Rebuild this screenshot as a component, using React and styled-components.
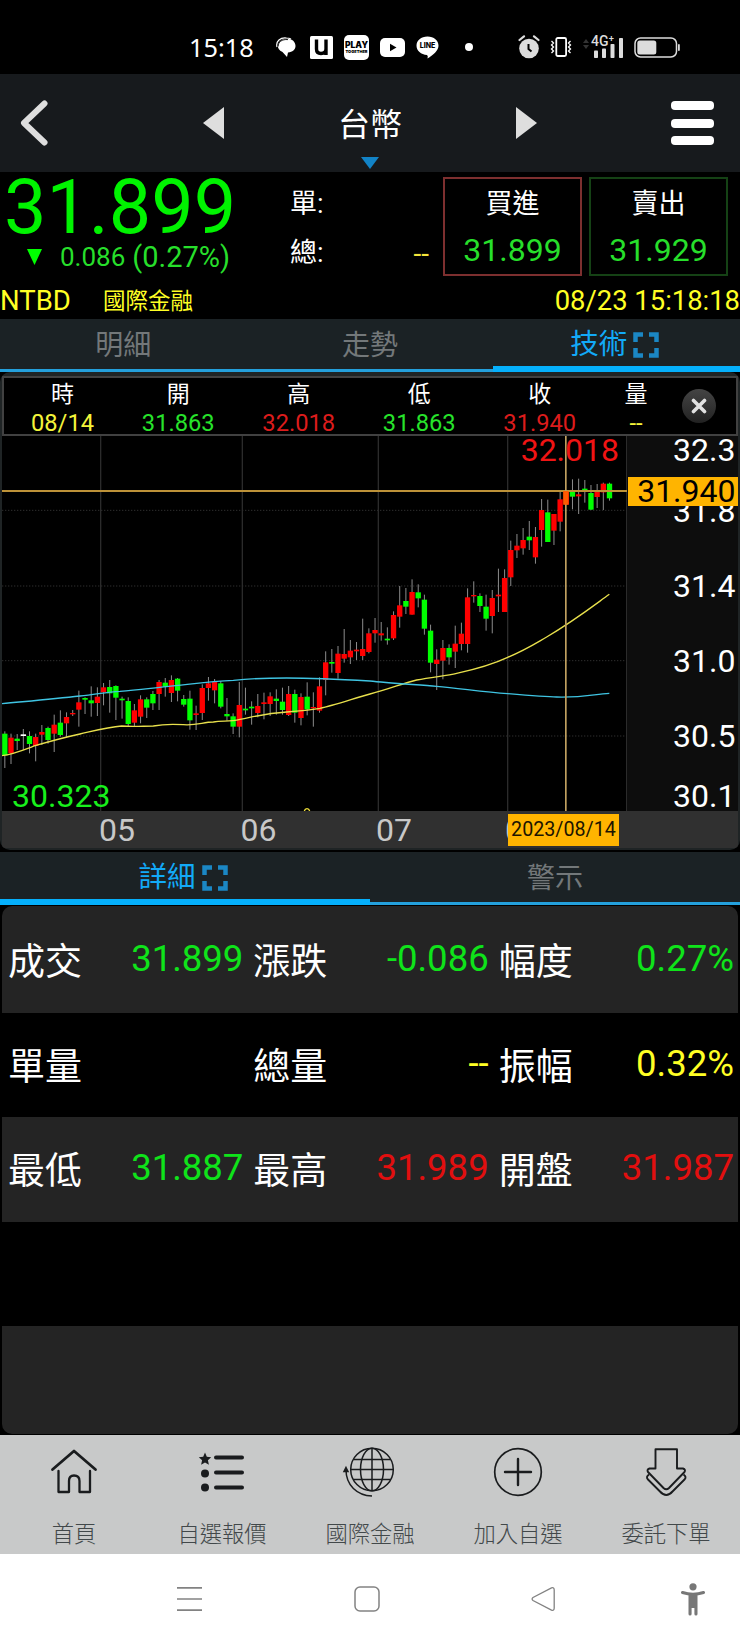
import React from 'react';
import styled, { createGlobalStyle } from 'styled-components';

// [color, body top, body bottom, wick top, wick bottom], 3 units per pixel
const candles = [
  ['g', 431, 496, 424, 534], ['r', 443, 490, 431, 522], ['g', 446, 453, 432, 480], ['w', 433, 438, 417, 480],
  ['g', 438, 462, 424, 490], ['r', 441, 468, 431, 514], ['r', 426, 434, 405, 465], ['g', 414, 450, 410, 461],
  ['r', 404, 431, 374, 486], ['g', 398, 435, 361, 440], ['r', 381, 400, 367, 442], ['r', 369, 373, 360, 378],
  ['r', 337, 359, 302, 410], ['g', 324, 329, 322, 372], ['g', 331, 340, 289, 380], ['r', 320, 339, 292, 378],
  ['r', 292, 307, 279, 346], ['g', 291, 310, 270, 368], ['g', 288, 323, 286, 390], ['g', 326, 331, 320, 386],
  ['g', 333, 402, 322, 408], ['r', 361, 398, 342, 410], ['r', 328, 380, 316, 400], ['g', 328, 353, 322, 384],
  ['g', 312, 340, 303, 360], ['r', 276, 312, 270, 360], ['g', 278, 290, 264, 320], ['r', 270, 309, 256, 336],
  ['g', 266, 302, 264, 334], ['g', 327, 344, 315, 350], ['g', 326, 391, 302, 419], ['r', 370, 375, 347, 420],
  ['r', 294, 369, 283, 390], ['r', 280, 294, 261, 332], ['r', 276, 301, 267, 340], ['g', 280, 350, 273, 355],
  ['g', 372, 379, 324, 392], ['g', 379, 410, 370, 432], ['r', 345, 410, 276, 442], ['g', 356, 361, 293, 374],
  ['g', 350, 355, 334, 404], ['r', 348, 369, 312, 382], ['r', 337, 342, 308, 388], ['r', 319, 342, 307, 378],
  ['g', 326, 333, 298, 374], ['g', 335, 360, 293, 374], ['r', 312, 375, 288, 378], ['g', 312, 368, 299, 398],
  ['r', 321, 384, 310, 406], ['g', 320, 358, 277, 376], ['r', 351, 355, 307, 410], ['r', 289, 362, 262, 368],
  ['r', 217, 270, 184, 316], ['g', 216, 221, 177, 248], ['r', 191, 249, 168, 266], ['r', 192, 206, 117, 218],
  ['r', 182, 202, 150, 222], ['r', 179, 184, 156, 210], ['r', 177, 198, 86, 210], ['r', 130, 186, 115, 190],
  ['r', 120, 130, 84, 158], ['r', 130, 136, 96, 152], ['g', 146, 151, 112, 164], ['r', 75, 145, 64, 150],
  ['r', 46, 80, -12, 113], ['g', 33, 50, -6, 72], ['r', 6, 74, -32, 74], ['g', 7, 25, -17, 52],
  ['g', 29, 116, 14, 134], ['g', 122, 218, 104, 247], ['r', 209, 222, 178, 300], ['r', 174, 212, 150, 268],
  ['g', 174, 202, 163, 224], ['r', 161, 185, 107, 234], ['r', 131, 162, 98, 181], ['r', 22, 162, -5, 188],
  ['r', 15, 19, -26, 38], ['g', 18, 48, 10, 66], ['g', 50, 86, 14, 122], ['r', 24, 78, 0, 130],
  ['r', 14, 19, -64, 66], ['r', -36, 66, -62, 66], ['r', -120, -38, -148, -12], ['r', -133, -119, -168, -96],
  ['r', -150, -125, -186, -106], ['g', -160, -149, -207, -120], ['r', -159, -98, -189, -79], ['r', -240, -180, -273, -130],
  ['g', -233, -144, -271, -144], ['r', -228, -178, -228, -135], ['r', -272, -205, -294, -176], ['r', -297, -256, -300, -256],
  ['g', -297, -280, -332, -242], ['r', -287, -281, -334, -228], ['g', -304, -298, -330, -262], ['g', -291, -241, -315, -240],
  ['r', -298, -279, -318, -246], ['r', -319, -293, -322, -240], ['g', -319, -275, -322, -268],
];

const candleColor = { g: '#00ff00', r: '#ff0000', w: '#ffffff' };

const yellowLine =
  'M6 497 C35 494 70 480 105 467 C150 454 190 443 240 432 C280 423 325 411 365 408 C400 411 430 408 460 408 C490 402 520 402 550 404 C590 407 610 396 640 396 C670 392 690 395 720 388 C780 376 800 370 860 366 C900 363 930 360 960 355 C1000 347 1060 326 1110 312 C1170 297 1210 279 1250 270 C1300 260 1340 258 1370 250 C1420 239 1470 227 1523 202 C1580 178 1610 158 1640 141 C1720 94 1770 55 1828 13';
const cyanLine =
  'M6 341 C90 333 160 327 240 318 C290 313 320 306 360 304 C410 300 450 295 500 290 C570 283 630 274 700 271 C760 265 820 264 860 264 C950 264 1040 269 1110 273 C1160 279 1250 284 1310 289 C1380 295 1450 306 1523 311 C1580 316 1640 321 1670 321 C1750 323 1780 313 1828 310';

const ohlc = [
  { label: '時', value: '08/14', color: '#f4f43a' },
  { label: '開', value: '31.863', color: '#27e32b' },
  { label: '高', value: '32.018', color: '#dc1c1c' },
  { label: '低', value: '31.863', color: '#27e32b' },
  { label: '收', value: '31.940', color: '#dc1c1c' },
  { label: '量', value: '--', color: '#f4f43a' },
];

const prices = [
  { text: '32.3', y: 14 },
  { text: '31.8', y: 75 },
  { text: '31.4', y: 150 },
  { text: '31.0', y: 225 },
  { text: '30.5', y: 300 },
  { text: '30.1', y: 360 },
];

const months = [
  { text: '05', x: 97 },
  { text: '06', x: 238.5 },
  { text: '07', x: 374 },
  { text: '08', x: 503 },
];

const details = [
  [
    { label: '成交', value: '31.899', color: '#0fe31a' },
    { label: '漲跌', value: '-0.086', color: '#0fe31a' },
    { label: '幅度', value: '0.27%', color: '#0fe31a' },
  ],
  [
    { label: '單量', value: '', color: '#fff' },
    { label: '總量', value: '--', color: '#ffff24' },
    { label: '振幅', value: '0.32%', color: '#ffff24' },
  ],
  [
    { label: '最低', value: '31.887', color: '#0fe31a' },
    { label: '最高', value: '31.989', color: '#e20f0f' },
    { label: '開盤', value: '31.987', color: '#e20f0f' },
  ],
  [],
  [],
];

const menus = [
  { label: '首頁', icon: <HomeIcon /> },
  { label: '自選報價', icon: <ListIcon /> },
  { label: '國際金融', icon: <GlobeIcon /> },
  { label: '加入自選', icon: <PlusIcon /> },
  { label: '委託下單', icon: <OrderIcon /> },
];

export default function App() {
  return (
    <Screen>
      <GlobalStyle />
      <StatusBar />
      <Header>
        <svg width="28" height="46" viewBox="0 0 28 46">
          <path d="M24.500 3.500 L4 23 L24.500 42.500" fill="none" stroke="#dedede" strokeWidth="6" strokeLinecap="round" strokeLinejoin="round" />
        </svg>
        <TitleGroup>
          <svg width="21" height="32" viewBox="0 0 21 32">
            <path d="M21 0 V32 L0 16 Z" fill="#dedede" />
          </svg>
          <Title>
            台幣
            <TitleArrow width="18" height="12" viewBox="0 0 18 12">
              <path d="M0 0 H18 L9 12 Z" fill="#1283c6" />
            </TitleArrow>
          </Title>
          <svg width="21" height="32" viewBox="0 0 21 32">
            <path d="M0 0 V32 L21 16 Z" fill="#dedede" />
          </svg>
        </TitleGroup>
        <MenuButton>
          <span />
          <span />
          <span />
        </MenuButton>
      </Header>

      <Quote>
        <PriceBlock>
          <LastPrice>31.899</LastPrice>
          <Change>
            <svg width="15" height="16" viewBox="0 0 15 16">
              <path d="M0 0 H15 L7.5 16 Z" fill="#00ff00" />
            </svg>
            <ChangeValue>0.086</ChangeValue>
            <ChangeRate>(0.27%)</ChangeRate>
          </Change>
        </PriceBlock>
        <VolumeBlock>
          <VolumeRow>單:</VolumeRow>
          <VolumeRow>
            總:<Dash>--</Dash>
          </VolumeRow>
        </VolumeBlock>
        <OrderBox $color="#7d2f2f">
          <OrderLabel>買進</OrderLabel>
          <OrderPrice>31.899</OrderPrice>
        </OrderBox>
        <OrderBox $color="#154215">
          <OrderLabel>賣出</OrderLabel>
          <OrderPrice>31.929</OrderPrice>
        </OrderBox>
      </Quote>
      <InfoRow>
        <Code>NTBD</Code>
        <Market>國際金融</Market>
        <Time>08/23 15:18:18</Time>
      </InfoRow>

      <Tabs>
        <Tab>明細</Tab>
        <Tab>走勢</Tab>
        <Tab $active>
          技術
          <ExpandIcon />
        </Tab>
      </Tabs>

      <ChartPanel>
        <OhlcBar>
          {ohlc.map((item) => (
            <OhlcItem key={item.label}>
              <OhlcLabel>{item.label}</OhlcLabel>
              <OhlcValue $color={item.color}>{item.value}</OhlcValue>
            </OhlcItem>
          ))}
          <CloseButton>
            <svg width="16" height="16" viewBox="0 0 16 16">
              <path d="M2.5 2.5 L13.5 13.5 M13.5 2.5 L2.5 13.5" stroke="#e2e2e2" strokeWidth="3.6" strokeLinecap="round" />
            </svg>
          </CloseButton>
        </OhlcBar>
        <ChartBody>
          <Plot>
            <HighLabel>32.018</HighLabel>
            <LowLabel>30.323</LowLabel>
            <CandleChart />
          </Plot>
          <PriceAxis>
            {prices.map((price) => (
              <AxisPrice key={price.text} $y={price.y}>
                {price.text}
              </AxisPrice>
            ))}
            <CurrentPrice>31.940</CurrentPrice>
          </PriceAxis>
        </ChartBody>
        <MonthAxis>
          {months.map((month) => (
            <Month key={month.text} $x={month.x}>
              {month.text}
            </Month>
          ))}
          <DateBadge>2023/08/14</DateBadge>
        </MonthAxis>
      </ChartPanel>

      <Tabs>
        <Tab $active>
          詳細
          <ExpandIcon />
        </Tab>
        <Tab>警示</Tab>
      </Tabs>

      <DetailTable>
        {details.map((row, i) => (
          <DetailRow key={i}>
            {row.map((cell) => (
              <DetailCell key={cell.label}>
                <DetailLabel>{cell.label}</DetailLabel>
                <DetailValue $color={cell.color}>{cell.value}</DetailValue>
              </DetailCell>
            ))}
          </DetailRow>
        ))}
      </DetailTable>

      <BottomMenu>
        {menus.map((menu) => (
          <MenuItem key={menu.label}>
            {menu.icon}
            <MenuLabel>{menu.label}</MenuLabel>
          </MenuItem>
        ))}
      </BottomMenu>
      <SystemNav />
    </Screen>
  );
}

function StatusBar() {
  return (
    <StatusWrap>
      <Clock>15:18</Clock>
      <NoticeIcons>
        <svg width="23" height="20" viewBox="0 0 23 20">
          <path d="M8 2 C15 .5 19.500 4 19.500 9 C19.500 12.500 16.500 15 12 15.500 L11 20 L6.500 15 C3 13.500 1.500 11 2 8 C2.500 5 5 2.800 8 2 Z" fill="#fff" />
          <path d="M1 10 C-.5 4 4.500 .300 10.500 1 Q13 1 15 2" fill="none" stroke="#fff" strokeWidth="1.200" />
          <path d="M2.200 9.500 C2 5 6 2 12 2.600" fill="none" stroke="#000" strokeWidth=".9" />
        </svg>
        <svg width="23" height="23" viewBox="0 0 23 23">
          <rect width="23" height="23" rx="1.500" fill="#fff" />
          <path d="M6.500 3.500 V13 Q6.500 17.500 11 17.500 Q16 17.500 16 13 V3.500 M16 10 V19" fill="none" stroke="#000" strokeWidth="3.400" />
        </svg>
        <PlayBadge>
          <b>PLAY</b>
          <i>TOGETHER</i>
        </PlayBadge>
        <svg width="25" height="19" viewBox="0 0 25 19">
          <rect width="25" height="19" rx="5" fill="#fff" />
          <path d="M10 5.800 V13.200 L16.500 9.500 Z" fill="#000" />
        </svg>
        <LineBadge>
          <svg width="23" height="23" viewBox="0 0 23 23">
            <path d="M11.500 .5 C18 .5 22.500 4.500 22.500 9.700 C22.500 14.500 17 19 11.500 22.500 Q12.300 19.500 11 19 C5 18.500 .5 14.500 .5 9.700 C.5 4.500 5 .5 11.500 .5 Z" fill="#fff" />
          </svg>
          <LineText>LINE</LineText>
        </LineBadge>
        <Dot />
      </NoticeIcons>
      <DeviceIcons>
        <svg width="22" height="24" viewBox="0 0 22 24">
          <circle cx="11" cy="13.500" r="9.800" fill="#dcdcdc" />
          <path d="M1.500 5 L6 1.300 M20.500 5 L16 1.300" stroke="#dcdcdc" strokeWidth="2.200" strokeLinecap="round" />
          <path d="M10.500 9 V14 L13.500 16.500" fill="none" stroke="#000" strokeWidth="2" />
        </svg>
        <svg width="22" height="20" viewBox="0 0 22 20">
          <rect x="6.300" y="1" width="9.800" height="18" rx="1.500" fill="none" stroke="#fff" strokeWidth="1.800" />
          <path d="M1.500 4 L3.500 6 L1.500 8 L3.500 10 L1.500 12 L3.500 14 L1.500 16 M20.500 4 L18.500 6 L20.500 8 L18.500 10 L20.500 12 L18.500 14 L20.500 16" fill="none" stroke="#fff" strokeWidth="1.300" />
        </svg>
        <Signal>
          <svg width="42" height="23" viewBox="0 0 42 23">
            <path d="M1 7 L4 3 L7 7 Z M1 9 L4 13 L7 9 Z" fill="#333" />
            <rect x="12" y="14.500" width="4" height="7.500" rx=".8" fill="#dcdcdc" />
            <rect x="20" y="12.500" width="4" height="9.500" rx=".8" fill="#dcdcdc" />
            <rect x="28.500" y="8" width="4" height="14" rx=".8" fill="#dcdcdc" />
            <rect x="37" y="2" width="4" height="20" rx=".8" fill="#dcdcdc" />
          </svg>
          <Network>4G⁺</Network>
        </Signal>
        <svg width="46" height="21" viewBox="0 0 46 21">
          <rect x="1" y="1" width="41.500" height="19" rx="5.500" fill="none" stroke="#dcdcdc" strokeWidth="1.500" />
          <rect x="3.300" y="3.500" width="19" height="14" rx="2.500" fill="#dcdcdc" />
          <rect x="44" y="7" width="1.800" height="7" rx=".9" fill="#dcdcdc" />
        </svg>
      </DeviceIcons>
    </StatusWrap>
  );
}

function CandleChart() {
  return (
    <svg width="625" height="375" viewBox="6 -462 1875 1125">
      {[302, 727, 1135, 1523, 1880].map((x) => (
        <path key={x} d={`M${x} -462 V663`} stroke="#2b2b2b" strokeWidth="4" />
      ))}
      {[-239, -12, 212, 438].map((y) => (
        <path key={y} d={`M6 ${y} H1881`} stroke="#2e2e2e" strokeWidth="3" strokeDasharray="4 5" />
      ))}
      {candles.map(([color, top, bottom, high, low], i) => {
        const x = 14.5 + i * 18.51;
        return (
          <g key={i}>
            <path d={`M${x} ${high} V${low}`} stroke="#8c8c8c" strokeWidth="3" />
            <rect x={x - 8} y={top} width="16" height={bottom - top} fill={candleColor[color]} />
          </g>
        );
      })}
      <path d={yellowLine} fill="none" stroke="#e8e04c" strokeWidth="4" />
      <path d={cyanLine} fill="none" stroke="#3fc4e2" strokeWidth="4" />
      <path d="M6 -297 H1881" stroke="#bd9238" strokeWidth="6" />
      <path d="M1697.500 -462 V663" stroke="#c0a060" strokeWidth="5" />
      <rect x="1689.500" y="-297" width="16" height="41" fill="#ff5a00" />
      <path d="M913 663 Q915 656 921 656 Q927 656 929 663" fill="none" stroke="#f4e43a" strokeWidth="4" />
    </svg>
  );
}

function ExpandIcon() {
  return (
    <svg width="26" height="26" viewBox="0 0 26 26">
      <path d="M2.500 10 V2.500 H10 M16 2.500 H23.500 V10 M23.500 16 V23.500 H16 M10 23.500 H2.500 V16" fill="none" stroke="#1b87c4" strokeWidth="4.500" />
    </svg>
  );
}

function HomeIcon() {
  return (
    <svg width="50" height="50" viewBox="0 0 50 50" fill="none" stroke="#1a1c1e" strokeWidth="2.500" strokeLinecap="round" strokeLinejoin="round">
      <path d="M3.500 22.500 L25 4 L46.500 22.500" strokeWidth="2.800" />
      <path d="M9.500 24 V45 H20 V34 Q20 28.500 25 28.500 Q30.500 28.500 30.500 34 V45 H41 V24" strokeWidth="2.300" />
    </svg>
  );
}

function ListIcon() {
  return (
    <svg width="50" height="50" viewBox="0 0 50 50">
      <path d="M8 5.500 L9.800 9.800 L14.200 10.200 L10.900 13.300 L11.900 17.800 L8 15.400 L4.100 17.800 L5.100 13.300 L1.800 10.200 L6.200 9.800 Z" fill="#1a1c1e" />
      <circle cx="8" cy="26.500" r="4" fill="#1a1c1e" />
      <circle cx="8" cy="40.500" r="4" fill="#1a1c1e" />
      <path d="M19 10.500 H45 M19 25.500 H45 M19 40.500 H45" stroke="#1a1c1e" strokeWidth="4" strokeLinecap="round" />
    </svg>
  );
}

function GlobeIcon() {
  return (
    <svg width="56" height="50" viewBox="0 0 56 50" fill="none" stroke="#1a1c1e" strokeWidth="1.500">
      <circle cx="30" cy="22.500" r="21.300" />
      <ellipse cx="30" cy="22.500" rx="11.500" ry="21.300" />
      <path d="M30 1 V44 M9 22.500 H51 M12 12.500 H48 M12 32.500 H48" />
      <path d="M4 23 C4 38 15 48.500 30 49" />
      <path d="M4 20.500 L6 24.500 H2 Z" fill="#1a1c1e" />
    </svg>
  );
}

function PlusIcon() {
  return (
    <svg width="50" height="50" viewBox="0 0 50 50" fill="none" stroke="#1a1c1e" strokeLinecap="round">
      <circle cx="25" cy="25" r="23.300" strokeWidth="1.700" />
      <path d="M25 12 V38 M12 25 H38" strokeWidth="2.400" />
    </svg>
  );
}

function OrderIcon() {
  return (
    <svg width="50" height="50" viewBox="0 0 50 50" fill="none" stroke="#1a1c1e" strokeWidth="1.900" strokeLinejoin="round">
      <path d="M14.500 2.200 H36 V21.500 H42 Q45 22.500 43.500 25 L28 41 Q25.300 43.500 22.500 41 L7 25 Q5.500 22.500 8.500 21.500 H14.500 Z" />
      <path d="M8 27.500 Q4.500 30 7 32.500 L19 44.500 Q25.300 51.500 31.500 44.500 L43.500 32.500 Q46 30 42.500 27.500" />
    </svg>
  );
}

function SystemNav() {
  return (
    <NavWrap>
      <svg width="25" height="26" viewBox="0 0 25 26">
        <path d="M0 1.800 H25 M0 13 H25 M0 24.200 H25" stroke="#828282" strokeWidth="1.700" />
      </svg>
      <svg width="26" height="26" viewBox="0 0 26 26">
        <rect x="1" y="1" width="24" height="24" rx="5" fill="none" stroke="#828282" strokeWidth="1.500" />
      </svg>
      <svg width="24" height="26" viewBox="0 0 24 26">
        <path d="M20.500 1.800 Q23.200 1 23.200 4 V22 Q23.200 25 20.500 24.200 L2 14.500 Q.2 13 2 11.500 Z" fill="none" stroke="#828282" strokeWidth="1.300" />
      </svg>
      <AccessIcon width="24" height="33" viewBox="0 0 24 33">
        <circle cx="12" cy="3.800" r="3.600" fill="#777" />
        <path d="M1.500 9.500 Q12 13 22.500 9.500" fill="none" stroke="#777" strokeWidth="3" strokeLinecap="round" />
        <path d="M7.500 10.500 H16.500 V31 Q16.500 32.500 15 32.500 Q13.400 32.500 13.400 31 V25 H10.600 V31 Q10.600 32.500 9 32.500 Q7.500 32.500 7.500 31 Z" fill="#777" />
      </AccessIcon>
    </NavWrap>
  );
}

const GlobalStyle = createGlobalStyle`
  body {
    margin: 0;
    background: #000;
  }
  svg {
    display: block;
    flex-shrink: 0;
  }
`;

const Screen = styled.div`
  width: 740px;
  height: 1644px;
  display: flex;
  flex-direction: column;
  overflow: hidden;
  background: #000;
  color: #fff;
  font-family: Roboto, 'Noto Sans CJK TC', sans-serif;
  white-space: nowrap;
`;

const StatusWrap = styled.div`
  height: 74px;
  flex-shrink: 0;
  display: flex;
  align-items: center;
  box-sizing: border-box;
  padding: 20px 60px 0 189px;
`;

const Clock = styled.span`
  width: 87px;
  font-family: 'Noto Sans', sans-serif;
  font-size: 25.3px;
  line-height: 30px;
`;

const NoticeIcons = styled.div`
  display: flex;
  align-items: center;
  gap: 11px;
`;

const PlayBadge = styled.div`
  width: 25px;
  height: 25px;
  border-radius: 5px;
  display: flex;
  flex-direction: column;
  align-items: center;
  justify-content: center;
  background: #fff;
  color: #000;
  overflow: hidden;
  font-family: Inter, sans-serif;
  b {
    font-size: 8.5px;
    font-weight: 900;
    line-height: 8px;
  }
  i {
    font-size: 4px;
    font-style: normal;
    font-weight: 900;
    line-height: 5px;
  }
`;

const LineBadge = styled.div`
  position: relative;
`;

const LineText = styled.span`
  position: absolute;
  top: 5px;
  left: 0;
  width: 23px;
  text-align: center;
  font-family: Inter, sans-serif;
  font-size: 7px;
  font-weight: 800;
  line-height: 9px;
  color: #000;
`;

const Dot = styled.span`
  width: 8px;
  height: 8px;
  margin-left: 15px;
  border-radius: 50%;
  background: #fff;
`;

const DeviceIcons = styled.div`
  display: flex;
  align-items: center;
  gap: 10px;
  margin-left: auto;
`;

const Signal = styled.div`
  position: relative;
`;

const Network = styled.span`
  position: absolute;
  top: -3px;
  left: 9px;
  font-size: 14px;
  font-weight: 500;
  line-height: 16px;
  color: #dcdcdc;
  text-shadow: 0 1px 1px #000;
`;

const Header = styled.header`
  height: 98px;
  flex-shrink: 0;
  display: flex;
  align-items: center;
  justify-content: space-between;
  box-sizing: border-box;
  padding: 0 26px 0 20px;
  background: #171a1d;
`;

const TitleGroup = styled.div`
  display: flex;
  align-items: center;
  justify-content: space-between;
  width: 334px;
  margin-left: 21px;
`;

const Title = styled.h1`
  position: relative;
  margin: 0;
  padding-top: 4px;
  font-size: 32px;
  font-weight: 400;
  line-height: 94px;
`;

const TitleArrow = styled.svg`
  position: absolute;
  bottom: 3px;
  left: 23px;
`;

const MenuButton = styled.div`
  width: 43px;
  height: 44px;
  display: flex;
  flex-direction: column;
  justify-content: space-between;
  span {
    height: 9px;
    border-radius: 4px;
    background: #fff;
  }
`;

const Quote = styled.section`
  height: 110px;
  flex-shrink: 0;
  display: flex;
`;

const PriceBlock = styled.div`
  width: 290px;
`;

const LastPrice = styled.p`
  margin: 0;
  padding-left: 4px;
  font-size: 75.5px;
  line-height: 70px;
  color: #00f300;
`;

const Change = styled.div`
  display: flex;
  align-items: center;
  padding-left: 27px;
  line-height: 29px;
  color: #27df2b;
`;

const ChangeValue = styled.span`
  margin: 1px 0 0 18px;
  font-size: 26px;
`;

const ChangeRate = styled.span`
  margin-left: 7px;
  font-size: 29px;
`;

const VolumeBlock = styled.div`
  width: 139px;
  margin-right: 14px;
  padding-top: 8px;
`;

const VolumeRow = styled.div`
  display: flex;
  justify-content: space-between;
  font-size: 27px;
  line-height: 49px;
`;

const Dash = styled.span`
  font-size: 28px;
  color: #f4e43a;
`;

const OrderBox = styled.div`
  width: 139px;
  height: 99px;
  margin: 5px 7px 0 0;
  padding-top: 1px;
  box-sizing: border-box;
  border: 2px solid ${(props) => props.$color};
  text-align: center;
`;

const OrderLabel = styled.p`
  margin: 0;
  font-size: 27px;
  line-height: 48px;
`;

const OrderPrice = styled.p`
  margin: 0;
  font-size: 32px;
  line-height: 44px;
  color: #27df2b;
`;

const InfoRow = styled.div`
  height: 37px;
  flex-shrink: 0;
  display: flex;
  line-height: 38px;
  color: #ffff24;
`;

const Code = styled.span`
  width: 103px;
  font-size: 27.5px;
`;

const Market = styled.span`
  font-size: 22.5px;
`;

const Time = styled.span`
  margin-left: auto;
  font-size: 27.4px;
`;

const Tabs = styled.nav`
  height: 53px;
  flex-shrink: 0;
  display: grid;
  grid-auto-flow: column;
  grid-auto-columns: 1fr;
  background: #1b2225;
`;

const Tab = styled.div`
  display: flex;
  justify-content: center;
  align-items: center;
  gap: 6px;
  box-sizing: border-box;
  padding: ${(props) => (props.$active ? '5px 4px 0 0' : '3px 0 0')};
  font-size: ${(props) => (props.$active ? '28.5px' : '28px')};
  line-height: 42px;
  color: ${(props) => (props.$active ? '#12aaf8' : '#73787a')};
  border-bottom: ${(props) => (props.$active ? '6px solid #05b0fc' : '3px solid #24a0dc')};
`;

const ChartPanel = styled.section`
  height: 478px;
  flex-shrink: 0;
  box-sizing: border-box;
  margin-bottom: 2px;
  padding: 4px 2px 2px;
  border-radius: 10px;
  overflow: hidden;
  background: #1f2425;
`;

const OhlcBar = styled.div`
  height: 60px;
  display: grid;
  grid-template-columns: 111px repeat(4, 120.5px) 72px 1fr;
  align-items: start;
  box-sizing: border-box;
  padding-left: 3px;
  border: 2px solid #414141;
  background: #000;
`;

const OhlcItem = styled.div`
  text-align: center;
`;

const OhlcLabel = styled.p`
  margin: 0;
  font-size: 23px;
  line-height: 33px;
`;

const OhlcValue = styled.p`
  margin: 0;
  font-size: 23.7px;
  line-height: 25px;
  color: ${(props) => props.$color};
`;

const CloseButton = styled.div`
  width: 34px;
  height: 34px;
  margin: 11px 0 0 9.5px;
  display: flex;
  align-items: center;
  justify-content: center;
  border-radius: 50%;
  background: linear-gradient(#444, #222);
`;

const ChartBody = styled.div`
  height: 375px;
  display: flex;
`;

const Plot = styled.div`
  position: relative;
  width: 625px;
  background: #000;
`;

const HighLabel = styled.span`
  position: absolute;
  top: -5px;
  right: 8px;
  font-size: 32px;
  line-height: 38px;
  color: #f01414;
`;

const LowLabel = styled.span`
  position: absolute;
  top: 341px;
  left: 10px;
  font-size: 32px;
  line-height: 38px;
  color: #18f01c;
`;

const PriceAxis = styled.div`
  position: relative;
  flex: 1;
  background: #0d0d0d;
`;

const AxisPrice = styled.span`
  position: absolute;
  top: ${(props) => props.$y - 19}px;
  left: 46px;
  font-size: 32px;
  line-height: 38px;
`;

const CurrentPrice = styled.span`
  position: absolute;
  top: 41px;
  left: 1px;
  right: 0;
  padding-right: 2.5px;
  text-align: right;
  font-size: 32px;
  line-height: 29px;
  color: #000;
  background: #ffb400;
`;

const MonthAxis = styled.div`
  position: relative;
  height: 37px;
  background: #303030;
`;

const Month = styled.span`
  position: absolute;
  top: 0;
  left: ${(props) => props.$x}px;
  font-size: 32px;
  line-height: 38px;
  color: #c8c8c8;
`;

const DateBadge = styled.span`
  position: absolute;
  top: 3px;
  left: 506px;
  width: 111px;
  text-align: center;
  font-size: 19.7px;
  line-height: 32px;
  color: #1c1400;
  background: #ffb400;
`;

const DetailTable = styled.section`
  height: 528px;
  flex-shrink: 0;
  margin: 1px 2px 0;
  border-radius: 10px;
  overflow: hidden;
`;

const DetailRow = styled.div`
  height: 104.3px;
  display: grid;
  grid-template-columns: repeat(3, 1fr);
  align-items: center;
  background: #242424;
  &:first-child {
    height: 105px;
    padding-top: 2px;
  }
  &:last-child {
    height: 109px;
  }
  &:nth-child(even) {
    background: #000;
  }
`;

const DetailCell = styled.div`
  display: flex;
  justify-content: space-between;
  padding: 0 4px 0 6px;
  line-height: 50px;
`;

const DetailLabel = styled.span`
  padding-top: 5px;
  font-size: 37px;
`;

const DetailValue = styled.span`
  padding-top: 1px;
  font-size: 36.5px;
  color: ${(props) => props.$color};
`;

const BottomMenu = styled.nav`
  height: 119px;
  flex-shrink: 0;
  display: flex;
  margin-top: 1px;
  background: #c8c9c9;
`;

const MenuItem = styled.div`
  flex: 1;
  display: flex;
  flex-direction: column;
  align-items: center;
  justify-content: space-between;
  box-sizing: border-box;
  padding: 12px 0 4px;
`;

const MenuLabel = styled.span`
  font-size: 22.3px;
  font-weight: 300;
  line-height: 32px;
  color: #42484a;
`;

const NavWrap = styled.div`
  flex: 1;
  display: flex;
  align-items: center;
  gap: 151.5px;
  padding: 0 36px 0 177px;
  background: #fff;
`;

const AccessIcon = styled.svg`
  margin-left: -26px;
`;
